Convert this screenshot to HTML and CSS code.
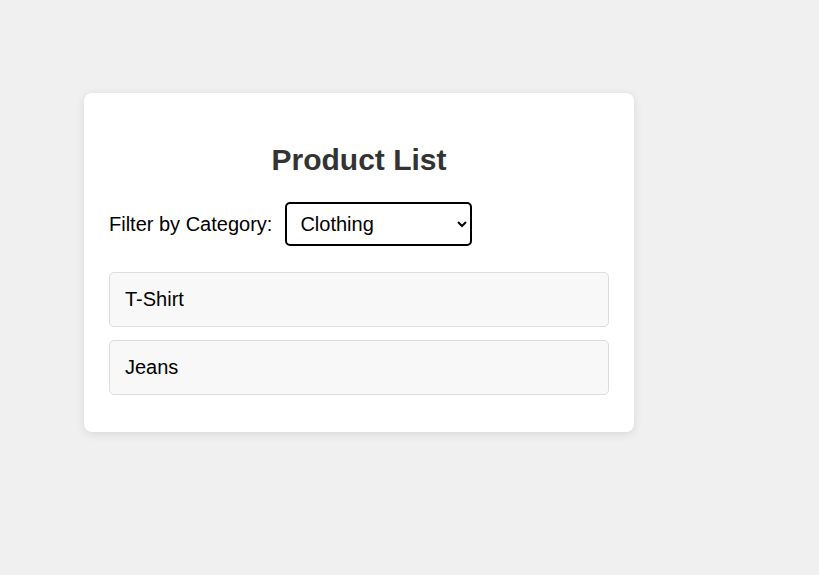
FILE: index.html
```html
<!DOCTYPE html>
<html lang="en">
<head>
<meta charset="utf-8">
<title>Product List</title>
<link rel="stylesheet" href="styles.css">
</head>
<body>
<div class="card">
  <h2 class="title">Product List</h2>
  <div class="filter">
    <label class="filter-label" for="category">Filter by Category:</label>
    <select id="category" class="filter-select">
      <option>All</option>
      <option>Electronics</option>
      <option selected>Clothing</option>
    </select>
  </div>
  <ul class="product-list">
    <li class="product">T-Shirt</li>
    <li class="product">Jeans</li>
  </ul>
</div>
</body>
</html>
```
FILE: styles.css
```css
html, body {
  margin: 0;
  padding: 0;
}
body {
  background: #f0f0f0;
  font-family: "Liberation Sans", Arial, sans-serif;
  font-size: 20px;
  color: #000;
  min-height: 575px;
}
.card {
  box-sizing: border-box;
  width: 550px;
  margin: 93px 0 0 84px;
  padding: 25px 25px 24px;
  background: #fff;
  border-radius: 8px;
  box-shadow: 0 2px 10px rgba(0, 0, 0, 0.1);
}
.title {
  margin: 25px 0 25px;
  text-align: center;
  font-size: 30px;
  line-height: 34px;
  font-weight: bold;
  color: #333;
}
.filter {
  display: flex;
  align-items: center;
  gap: 13px;
  margin-bottom: 26px;
}
.filter-label {
  line-height: 23px;
}
.filter-select {
  box-sizing: border-box;
  width: 187px;
  height: 44px;
  padding: 0 10px 0 9px;
  font-family: "Liberation Sans", Arial, sans-serif;
  font-size: 20px;
  color: #000;
  background: #fff;
  border: 2px solid #000;
  border-radius: 5px;
}
.product-list {
  list-style: none;
  margin: 0;
  padding: 0;
}
.product {
  padding: 15px;
  line-height: 23px;
  margin-bottom: 13px;
  background: #f8f8f8;
  border: 1px solid #ddd;
  border-radius: 5px;
}
```
